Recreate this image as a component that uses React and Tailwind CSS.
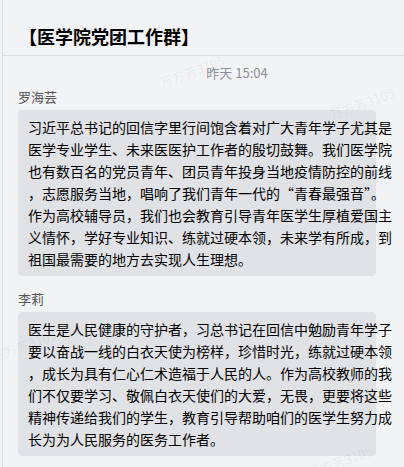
const font = { fontFamily: '"Noto Sans CJK SC", "Liberation Sans", sans-serif' };

const messages = [
  {
    name: "罗海芸",
    lines: [
      "习近平总书记的回信字里行间饱含着对广大青年学子尤其是",
      "医学专业学生、未来医医护工作者的殷切鼓舞。我们医学院",
      "也有数百名的党员青年、团员青年投身当地疫情防控的前线",
      "，志愿服务当地，唱响了我们青年一代的“青春最强音”。",
      "作为高校辅导员，我们也会教育引导青年医学生厚植爱国主",
      "义情怀，学好专业知识、练就过硬本领，未来学有所成，到",
      "祖国最需要的地方去实现人生理想。",
    ],
  },
  {
    name: "李莉",
    lines: [
      "医生是人民健康的守护者，习总书记在回信中勉励青年学子",
      "要以奋战一线的白衣天使为榜样，珍惜时光，练就过硬本领",
      "，成长为具有仁心仁术造福于人民的人。作为高校教师的我",
      "们不仅要学习、敬佩白衣天使们的大爱，无畏，更要将这些",
      "精神传递给我们的学生，教育引导帮助咱们的医学生努力成",
      "长为为人民服务的医务工作者。",
    ],
  },
];

// faint tiled watermark
const marks = [
  { left: 158, top: 62 },
  { left: 328, top: 94 },
  { left: -10, top: 336 },
  { left: 306, top: 452 },
];

function Message({ name, lines, first }) {
  return (
    <div className={first ? "" : "mt-[14px]"}>
      <div className="h-[18px] text-[13px] leading-[18px] text-[#555]">{name}</div>
      <div className="mt-[4px] w-[358px] rounded-[4px] bg-[#e1e2e6] px-[10px] py-[6px] text-[14px] leading-[22px] text-black">
        {lines.map((l, i) => (
          <div key={i} className="whitespace-nowrap">
            {l}
          </div>
        ))}
      </div>
    </div>
  );
}

export default function App() {
  return (
    <div className="relative h-[467px] w-[404px] overflow-hidden bg-[#f2f3f5]" style={font}>
      <div className="ml-[2px] h-full border-l border-[#dcdde1]">
        <div className="h-[56px] border-b border-[#dcdde1] pl-[16px] pt-[24px]">
          <div className="text-[18px] font-bold leading-[24px] text-black">【医学院党团工作群】</div>
        </div>

        <div className="mt-[8px] flex justify-center pl-[67px] text-[13px] leading-[18px] text-[#8c9099]">
          昨天 15:04
        </div>

        <div className="mt-[6px] pl-[15px]">
          {messages.map((m, i) => (
            <Message key={i} name={m.name} lines={m.lines} first={i === 0} />
          ))}
        </div>
      </div>

      {marks.map((m, i) => (
        <div
          key={i}
          className="pointer-events-none absolute -rotate-[20deg] whitespace-nowrap text-[13px] text-black/[0.06]"
          style={{ left: m.left, top: m.top }}
        >
          万方芳3105
        </div>
      ))}
    </div>
  );
}
